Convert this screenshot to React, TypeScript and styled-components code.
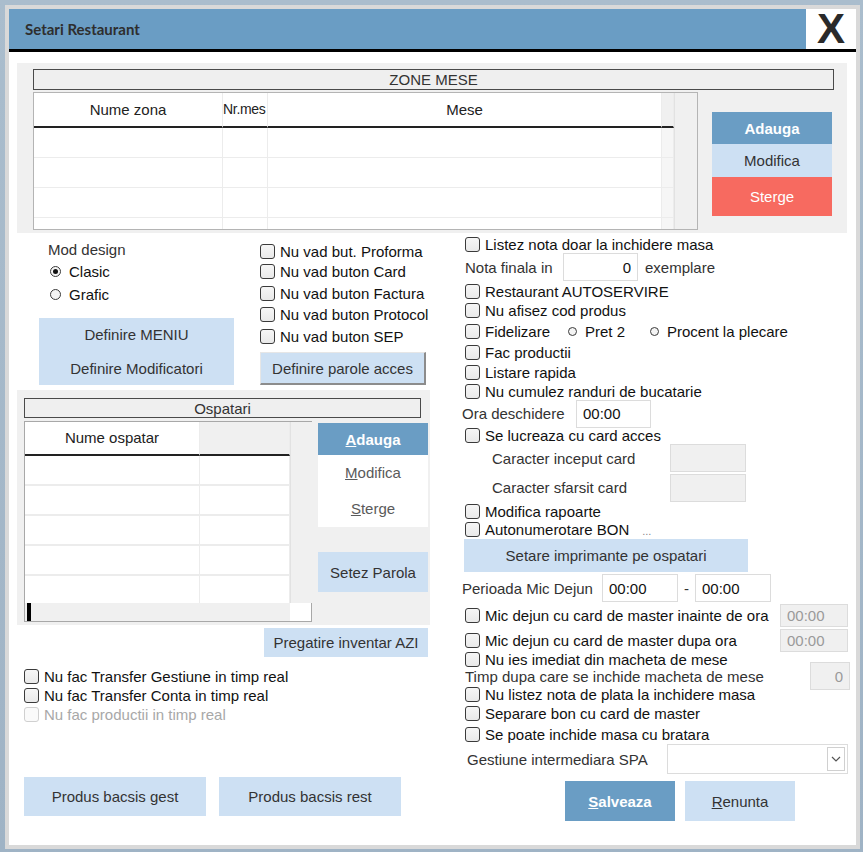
import React from "react";
import styled, { createGlobalStyle } from "styled-components";

const GlobalStyle = createGlobalStyle`
  html, body {
    margin: 0;
    padding: 0;
  }
  body {
    width: 863px;
    height: 852px;
    overflow: hidden;
    background: linear-gradient(#aabdcd, #9fb3c5);
    font-family: "Liberation Sans", Arial, sans-serif;
    font-size: 15px;
    color: #1c1c1c;
  }
`;

const Window = styled.div`
  margin: 5px 0 0 5px;
  width: 847px;
  height: 836px;
  border: 4px solid #d9d9d9;
  background: #fff;
  display: flex;
  flex-direction: column;
`;

const TitleBar = styled.div`
  display: flex;
  height: 40px;
  border-bottom: 3px solid #000;
  flex-shrink: 0;
`;

const TitleText = styled.div`
  flex: 1;
  display: flex;
  align-items: center;
  padding-left: 16px;
  background: #6a9dc4;
  font-family: Lato, "Liberation Sans", sans-serif;
  font-weight: 700;
  font-size: 15px;
  color: #2e2e2e;
`;

const CloseBox = styled.div`
  width: 50px;
  display: flex;
  align-items: center;
  justify-content: center;
  background: #fff;
  font-family: "Liberation Sans", Arial, sans-serif;
  font-weight: 700;
  font-size: 42px;
  line-height: 1;
  color: #2a2a2a;
  cursor: pointer;
`;

const Body = styled.div`
  padding: 11px 9px 0 8px;
  display: flex;
  flex-direction: column;
`;

/* ---------- shared bits ---------- */

const Button = styled.button<{ $variant?: "primary" | "light" | "danger" | "white"; $w?: number; $h: number }>`
  display: flex;
  align-items: center;
  justify-content: center;
  width: ${(p) => (p.$w ? `${p.$w}px` : "100%")};
  height: ${(p) => p.$h}px;
  flex-shrink: 0;
  border: none;
  padding: 0;
  font-family: inherit;
  font-size: 15px;
  cursor: pointer;
  background: ${(p) =>
    p.$variant === "primary"
      ? "#6a9dc4"
      : p.$variant === "danger"
      ? "#f76a60"
      : p.$variant === "white"
      ? "#fff"
      : "#cde0f3"};
  color: ${(p) =>
    p.$variant === "primary" || p.$variant === "danger" ? "#fff" : p.$variant === "white" ? "#5a5a5a" : "#333"};
  font-weight: ${(p) => (p.$variant === "primary" ? 700 : 400)};
`;

const BevelButton = styled(Button)`
  box-sizing: border-box;
  border-top: 1px solid #e6e6e6;
  border-left: 1px solid #e6e6e6;
  border-right: 2px solid #8c8c8c;
  border-bottom: 2px solid #8c8c8c;
`;

const Row = styled.div<{ $h: number; $pl?: number; $mt?: number }>`
  display: flex;
  align-items: center;
  height: ${(p) => p.$h}px;
  padding-left: ${(p) => p.$pl ?? 0}px;
  margin-top: ${(p) => p.$mt ?? 0}px;
  flex-shrink: 0;
  white-space: nowrap;
`;

const CheckWrap = styled.label<{ $w?: number; $off?: boolean }>`
  display: flex;
  align-items: center;
  gap: 5px;
  width: ${(p) => (p.$w ? `${p.$w}px` : "auto")};
  flex-shrink: 0;
  color: ${(p) => (p.$off ? "#a8a8a8" : "#111")};
  cursor: default;
`;

const Box = styled.span<{ $off?: boolean }>`
  width: 15px;
  height: 15px;
  box-sizing: border-box;
  border: 1px solid ${(p) => (p.$off ? "#d0d0d0" : "#3a3a3a")};
  border-radius: 3px;
  background: ${(p) => (p.$off ? "#fafafa" : "linear-gradient(#f6f6f6, #e9e9e9)")};
  flex-shrink: 0;
`;

const Check = ({ label, w, off }: { label: string; w?: number; off?: boolean }) => (
  <CheckWrap $w={w} $off={off}>
    <Box $off={off} />
    <span>{label}</span>
  </CheckWrap>
);

const RadioWrap = styled.label<{ $w?: number; $gap: number }>`
  display: flex;
  align-items: center;
  gap: ${(p) => p.$gap}px;
  width: ${(p) => (p.$w ? `${p.$w}px` : "auto")};
  flex-shrink: 0;
  color: #111;
`;

const Dot = styled.span<{ $on?: boolean; $size: number }>`
  position: relative;
  width: ${(p) => p.$size}px;
  height: ${(p) => p.$size}px;
  box-sizing: border-box;
  border: 1.5px solid #3a3a3a;
  border-radius: 50%;
  background: #f4f4f4;
  flex-shrink: 0;
  &::after {
    content: "";
    display: ${(p) => (p.$on ? "block" : "none")};
    position: absolute;
    inset: 2px;
    border-radius: 50%;
    background: #111;
  }
`;

const Radio = ({ label, on, size = 10, gap = 8, w }: { label: string; on?: boolean; size?: number; gap?: number; w?: number }) => (
  <RadioWrap $w={w} $gap={gap}>
    <Dot $on={on} $size={size} />
    <span>{label}</span>
  </RadioWrap>
);

const FieldLabel = styled.span<{ $w?: number }>`
  width: ${(p) => (p.$w ? `${p.$w}px` : "auto")};
  flex-shrink: 0;
  color: #333;
`;

const Field = styled.input<{ $w: number; $h: number; $right?: boolean; $off?: boolean }>`
  width: ${(p) => p.$w}px;
  height: ${(p) => p.$h}px;
  box-sizing: border-box;
  flex-shrink: 0;
  border: 1px solid #dcdcdc;
  outline: none;
  padding: 0 6px;
  font-family: inherit;
  font-size: 15px;
  text-align: ${(p) => (p.$right ? "right" : "left")};
  background: ${(p) => (p.$off ? "#f0f0f0" : "#fff")};
  color: ${(p) => (p.$off ? "#9a9a9a" : "#111")};
`;

const SectionHeader = styled.div<{ $h: number; $mr?: number }>`
  height: ${(p) => p.$h}px;
  margin-right: ${(p) => p.$mr ?? 0}px;
  box-sizing: border-box;
  border: 1px solid #4a4a4a;
  background: #efefef;
  display: flex;
  align-items: center;
  justify-content: center;
  color: #333;
`;

/* ---------- zone mese ---------- */

const ZonePanel = styled.div`
  height: 170px;
  box-sizing: border-box;
  background: #f0f0f0;
  padding: 6px 13px 0 16px;
  display: flex;
  flex-direction: column;
  flex-shrink: 0;
`;

const ZoneRow = styled.div`
  display: flex;
  margin-top: 2px;
`;

const ZoneGrid = styled.div`
  width: 665px;
  height: 138px;
  box-sizing: border-box;
  border: 1px solid #b4b4b4;
  background: #fff;
  display: flex;
  overflow: hidden;
  flex-shrink: 0;
`;

const ZoneTable = styled.div`
  flex: 1;
  display: grid;
  grid-template-columns: 189px 45px 394px 1fr;
  grid-template-rows: 35px;
  grid-auto-rows: 30px;
  align-content: start;
`;

const HeadCell = styled.div<{ $gray?: boolean; $left?: boolean; $tight?: boolean }>`
  box-sizing: border-box;
  border-bottom: 2px solid #222;
  border-right: 1px solid #ececec;
  background: ${(p) => (p.$gray ? "#f0f0f0" : "#fff")};
  display: flex;
  align-items: center;
  justify-content: ${(p) => (p.$left ? "flex-start" : "center")};
  padding-bottom: 1px;
  overflow: hidden;
  white-space: nowrap;
  color: #222;
  font-size: ${(p) => (p.$tight ? "14px" : "15px")};
  letter-spacing: ${(p) => (p.$tight ? "-0.3px" : "normal")};
`;

const Cell = styled.div<{ $gray?: boolean; $sep?: number }>`
  box-sizing: border-box;
  border-right: 1px solid #ececec;
  border-bottom: ${(p) => p.$sep ?? 1}px solid #ececec;
  background: ${(p) => (p.$gray ? "#f6f6f6" : "#fff")};
`;

const VScroll = styled.div<{ $w: number }>`
  width: ${(p) => p.$w}px;
  background: #f0f0f0;
  border-left: 1px solid #e2e2e2;
  flex-shrink: 0;
`;

const ZoneButtons = styled.div`
  width: 120px;
  margin: 20px 0 0 14px;
  display: flex;
  flex-direction: column;
  flex-shrink: 0;
`;

/* ---------- lower part ---------- */

const Lower = styled.div`
  display: flex;
`;

const LeftCol = styled.div`
  width: 413px;
  display: flex;
  flex-direction: column;
  flex-shrink: 0;
`;

const TopArea = styled.div`
  display: flex;
  height: 157px;
`;

const DesignCol = styled.div`
  width: 195px;
  margin-left: 22px;
  padding-top: 7px;
  display: flex;
  flex-direction: column;
`;

const DefBlock = styled.div`
  margin-top: 13px;
  display: flex;
  flex-direction: column;
  background: #cde0f3;
`;

const OptionsCol = styled.div`
  margin-left: 26px;
  padding-top: 8px;
  display: flex;
  flex-direction: column;
`;

const OspPanel = styled.div`
  height: 235px;
  box-sizing: border-box;
  background: #f0f0f0;
  padding: 8px 2px 0 7px;
  display: flex;
  flex-direction: column;
  flex-shrink: 0;
`;

const OspRow = styled.div`
  display: flex;
  margin-top: 3px;
`;

const OspGrid = styled.div`
  width: 288px;
  height: 201px;
  box-sizing: border-box;
  border: 1px solid #a8a8a8;
  background: #fff;
  display: grid;
  grid-template-columns: 1fr 21px;
  grid-template-rows: 1fr 18px;
  flex-shrink: 0;
`;

const OspTable = styled.div`
  display: grid;
  grid-template-columns: 175px 1fr;
  grid-template-rows: 34px;
  grid-auto-rows: 30px;
  align-content: start;
  overflow: hidden;
`;

const HScroll = styled.div`
  background: #f0f0f0;
  display: flex;
  padding-left: 2px;
`;

const Thumb = styled.span`
  width: 4px;
  height: 100%;
  background: #000;
`;

const Corner = styled.div`
  background: #fff;
`;

const OspButtons = styled.div`
  width: 110px;
  margin: 2px 0 0 6px;
  display: flex;
  flex-direction: column;
  flex-shrink: 0;
`;

const WhiteGroup = styled.div`
  background: #fff;
  display: flex;
  flex-direction: column;
`;

const Pregatire = styled(Button)`
  align-self: flex-end;
  margin: 3px 2px 0 0;
`;

const BottomChecks = styled.div`
  margin-top: 10px;
  padding-left: 7px;
  display: flex;
  flex-direction: column;
`;

const BacsisRow = styled.div`
  display: flex;
  gap: 13px;
  margin-top: 53px;
  padding-left: 7px;
`;

const RightCol = styled.div`
  margin-left: 32px;
  width: 388px;
  padding-top: 2px;
  display: flex;
  flex-direction: column;
`;

const Ellipsis = styled.span`
  margin-left: 13px;
  color: #888;
  font-size: 11px;
  padding-top: 4px;
`;

const Dash = styled.span`
  width: 17px;
  text-align: center;
  color: #333;
  flex-shrink: 0;
`;

const Select = styled.div`
  width: 181px;
  height: 30px;
  box-sizing: border-box;
  border: 1px solid #dcdcdc;
  background: #fff;
  display: flex;
  justify-content: flex-end;
  align-items: center;
  padding-right: 2px;
  flex-shrink: 0;
`;

const SelectArrow = styled.span`
  width: 18px;
  height: 24px;
  box-sizing: border-box;
  border: 1px solid #d0d0d0;
  display: flex;
  align-items: center;
  justify-content: center;
`;

const ActionRow = styled.div`
  display: flex;
  gap: 10px;
  margin: 6px 0 0 103px;
`;

export default function App() {
  return (
    <>
      <GlobalStyle />
      <Window>
        <TitleBar>
          <TitleText>Setari Restaurant</TitleText>
          <CloseBox>X</CloseBox>
        </TitleBar>
        <Body>
          <ZonePanel>
            <SectionHeader $h={21}>ZONE MESE</SectionHeader>
            <ZoneRow>
              <ZoneGrid>
                <ZoneTable>
                  <HeadCell>Nume zona</HeadCell>
                  <HeadCell $left $tight>Nr.mes</HeadCell>
                  <HeadCell>Mese</HeadCell>
                  <HeadCell $gray />
                  {Array.from({ length: 4 }).map((_, i) => (
                    <React.Fragment key={i}>
                      <Cell />
                      <Cell />
                      <Cell />
                      <Cell $gray />
                    </React.Fragment>
                  ))}
                </ZoneTable>
                <VScroll $w={22} />
              </ZoneGrid>
              <ZoneButtons>
                <Button $variant="primary" $h={32}>Adauga</Button>
                <Button $variant="light" $h={33}>Modifica</Button>
                <Button $variant="danger" $h={39}>Sterge</Button>
              </ZoneButtons>
            </ZoneRow>
          </ZonePanel>

          <Lower>
            <LeftCol>
              <TopArea>
                <DesignCol>
                  <Row $h={19} $pl={9}>
                    <FieldLabel>Mod design</FieldLabel>
                  </Row>
                  <Row $h={24} $pl={11}>
                    <Radio label="Clasic" on size={11} />
                  </Row>
                  <Row $h={22} $pl={11}>
                    <Radio label="Grafic" size={11} />
                  </Row>
                  <DefBlock>
                    <Button $variant="light" $h={33}>Definire MENIU</Button>
                    <Button $variant="light" $h={34}>Definire Modificatori</Button>
                  </DefBlock>
                </DesignCol>
                <OptionsCol>
                  <Row $h={20}><Check label="Nu vad but. Proforma" /></Row>
                  <Row $h={21}><Check label="Nu vad buton Card" /></Row>
                  <Row $h={22}><Check label="Nu vad buton Factura" /></Row>
                  <Row $h={21}><Check label="Nu vad buton Protocol" /></Row>
                  <Row $h={23}><Check label="Nu vad buton SEP" /></Row>
                  <Row $h={33} $mt={4}>
                    <BevelButton $variant="light" $w={166} $h={33}>Definire parole acces</BevelButton>
                  </Row>
                </OptionsCol>
              </TopArea>

              <OspPanel>
                <SectionHeader $h={20} $mr={7}>Ospatari</SectionHeader>
                <OspRow>
                  <OspGrid>
                    <OspTable>
                      <HeadCell>Nume ospatar</HeadCell>
                      <HeadCell $gray />
                      {Array.from({ length: 5 }).map((_, i) => (
                        <React.Fragment key={i}>
                          <Cell $sep={2} />
                          <Cell $sep={2} />
                        </React.Fragment>
                      ))}
                    </OspTable>
                    <VScroll $w={21} />
                    <HScroll>
                      <Thumb />
                    </HScroll>
                    <Corner />
                  </OspGrid>
                  <OspButtons>
                    <Button $variant="primary" $h={32}><u>A</u>dauga</Button>
                    <WhiteGroup>
                      <Button $variant="white" $h={35}><u>M</u>odifica</Button>
                      <Button $variant="white" $h={37}><u>S</u>terge</Button>
                    </WhiteGroup>
                    <Button $variant="light" $h={40} style={{ marginTop: 25 }}>Setez Parola</Button>
                  </OspButtons>
                </OspRow>
              </OspPanel>

              <Pregatire $variant="light" $w={164} $h={29}>Pregatire inventar AZI</Pregatire>

              <BottomChecks>
                <Row $h={19}><Check label="Nu fac Transfer Gestiune in timp real" /></Row>
                <Row $h={19}><Check label="Nu fac Transfer Conta in timp real" /></Row>
                <Row $h={19}><Check label="Nu fac productii in timp real" off /></Row>
              </BottomChecks>

              <BacsisRow>
                <Button $variant="light" $w={182} $h={39}>Produs bacsis gest</Button>
                <Button $variant="light" $w={182} $h={39}>Produs bacsis rest</Button>
              </BacsisRow>
            </LeftCol>

            <RightCol>
              <Row $h={18} $pl={3}><Check label="Listez nota doar la inchidere masa" /></Row>
              <Row $h={28} $pl={3}>
                <FieldLabel $w={98}>Nota finala in</FieldLabel>
                <Field $w={75} $h={28} $right readOnly value="0" />
                <FieldLabel style={{ marginLeft: 7 }}>exemplare</FieldLabel>
              </Row>
              <Row $h={20} $pl={3}><Check label="Restaurant AUTOSERVIRE" /></Row>
              <Row $h={19} $pl={3}><Check label="Nu afisez cod produs" /></Row>
              <Row $h={22} $pl={3}>
                <Check label="Fidelizare" w={103} />
                <Radio label="Pret 2" size={9} gap={8} w={82} />
                <Radio label="Procent la plecare" size={9} gap={8} />
              </Row>
              <Row $h={21} $pl={3}><Check label="Fac productii" /></Row>
              <Row $h={19} $pl={3}><Check label="Listare rapida" /></Row>
              <Row $h={18} $pl={3}><Check label="Nu cumulez randuri de bucatarie" /></Row>
              <Row $h={27}>
                <FieldLabel $w={114}>Ora deschidere</FieldLabel>
                <Field $w={75} $h={28} readOnly value="00:00" />
              </Row>
              <Row $h={17} $pl={3}><Check label="Se lucreaza cu card acces" /></Row>
              <Row $h={28} $pl={30}>
                <FieldLabel $w={178}>Caracter inceput card</FieldLabel>
                <Field $w={76} $h={28} $off readOnly value="" />
              </Row>
              <Row $h={31} $pl={30}>
                <FieldLabel $w={178}>Caracter sfarsit card</FieldLabel>
                <Field $w={76} $h={28} $off readOnly value="" />
              </Row>
              <Row $h={16} $pl={3}><Check label="Modifica rapoarte" /></Row>
              <Row $h={20} $pl={3}>
                <Check label="Autonumerotare BON" />
                <Ellipsis>...</Ellipsis>
              </Row>
              <Row $h={33} $pl={2}>
                <Button $variant="light" $w={284} $h={33}>Setare imprimante pe ospatari</Button>
              </Row>
              <Row $h={32}>
                <FieldLabel $w={140}>Perioada Mic Dejun</FieldLabel>
                <Field $w={76} $h={28} readOnly value="00:00" />
                <Dash>-</Dash>
                <Field $w={76} $h={28} readOnly value="00:00" />
              </Row>
              <Row $h={23} $pl={3}>
                <Check label="Mic dejun cu card de master inainte de ora" w={315} />
                <Field $w={68} $h={23} $off readOnly value="00:00" />
              </Row>
              <Row $h={26} $pl={3}>
                <Check label="Mic dejun cu card de master dupa ora" w={315} />
                <Field $w={68} $h={23} $off readOnly value="00:00" />
              </Row>
              <Row $h={12} $pl={3}><Check label="Nu ies imediat din macheta de mese" /></Row>
              <Row $h={22} $pl={3}>
                <FieldLabel $w={345}>Timp dupa care se inchide macheta de mese</FieldLabel>
                <Field $w={40} $h={28} $off $right readOnly value="0" />
              </Row>
              <Row $h={14} $pl={3}><Check label="Nu listez nota de plata la inchidere masa" /></Row>
              <Row $h={24} $pl={3}><Check label="Separare bon cu card de master" /></Row>
              <Row $h={18} $pl={3}><Check label="Se poate inchide masa cu bratara" /></Row>
              <Row $h={32} $pl={5}>
                <FieldLabel $w={200}>Gestiune intermediara SPA</FieldLabel>
                <Select>
                  <SelectArrow>
                    <svg width="10" height="6" viewBox="0 0 10 6">
                      <path d="M1 1 L5 5 L9 1" fill="none" stroke="#555" strokeWidth="1.2" />
                    </svg>
                  </SelectArrow>
                </Select>
              </Row>
              <ActionRow>
                <Button $variant="primary" $w={110} $h={40}><u>S</u>alveaza</Button>
                <Button $variant="light" $w={110} $h={40}><u>R</u>enunta</Button>
              </ActionRow>
            </RightCol>
          </Lower>
        </Body>
      </Window>
    </>
  );
}
